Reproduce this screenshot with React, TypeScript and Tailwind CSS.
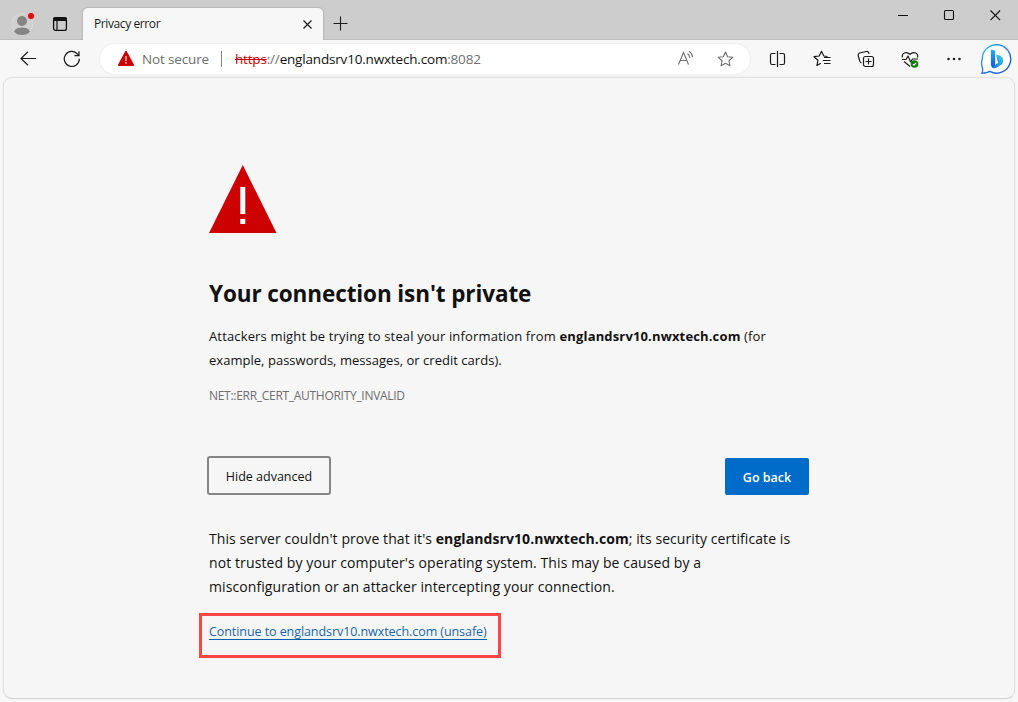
import type { ReactNode } from "react";

function IconButton({ label, className, children }: { label: string; className: string; children: ReactNode }) {
  return (
    <button aria-label={label} className={`flex h-9 shrink-0 items-center justify-center text-[#1b1b1b] ${className}`}>
      {children}
    </button>
  );
}

function TabStrip() {
  return (
    <header className="flex h-10 shrink-0 border-b border-[#c0c0c0] bg-[#cdcdcd]">
      <div className="flex w-[83px] pt-3 pl-3">
        <svg width="24" height="24" viewBox="0 0 24 24">
          <circle cx="10.2" cy="12" r="10.5" fill="#d0d0d0" stroke="#dadada" />
          <circle cx="10" cy="9" r="5" fill="#858585" />
          <path d="M2 19.5C3.5 16.5 6.5 15.6 10 15.6s6.5.9 8 3.9C16.200 22 13.500 23 10 23s-6.200-1-8-3.500Z" fill="#858585" />
          <circle cx="19" cy="4" r="3.600" fill="#e30c0c" stroke="#dadada" strokeWidth=".8" />
        </svg>
        <svg className="mt-1 ml-4" width="16" height="16" viewBox="0 0 16 16">
          <rect x="1.600" y="1.600" width="12.800" height="12.800" rx="2" fill="none" stroke="#111" strokeWidth="1.300" />
          <path d="M1 5V3.200Q1 1 3.200 1h9.600Q15 1 15 3.200V5Z" fill="#111" />
          <path d="M5 4v10" stroke="#111" strokeWidth="1.200" />
        </svg>
      </div>
      <div className="mt-2 flex h-8 w-60 shrink-0 items-center justify-between rounded-t-[5px] bg-[#f7f7f7] pr-[11px] pl-[11px] shadow-[0_0_2px_rgba(0,0,0,0.3)] [clip-path:inset(-3px_-3px_0_-3px)]">
        <span className="text-[12px] leading-8 tracking-[-0.4px] whitespace-nowrap text-[#1b1b1b]">Privacy error</span>
        <svg width="9" height="9" viewBox="0 0 9 9" stroke="#1b1b1b" strokeWidth="1.200">
          <path d="m.5.5 8 8m0-8-8 8" />
        </svg>
      </div>
      <svg className="mt-4 ml-[10px]" width="15" height="15" viewBox="0 0 15 15" stroke="#1b1b1b" strokeWidth="1.100">
        <path d="M7.500.5v14M.5 7.500h14" />
      </svg>
      <div className="ml-auto flex pt-2">
        <svg width="128" height="16" viewBox="0 0 128 16" fill="none" stroke="#111" strokeWidth="1.100">
          <path d="M8 7.500h10M100.500 2.500l9.600 9.600m0-9.600-9.600 9.600" />
          <rect x="54.500" y="2.500" width="9" height="9" rx="1.300" />
        </svg>
      </div>
    </header>
  );
}

function BingLogo() {
  return (
    <svg className="mt-px shrink-0" width="32" height="33" viewBox="0 0 32 33">
      <defs>
        <linearGradient id="ring" x1="0" y1="0" x2="1" y2="1">
          <stop offset="0" stopColor="#39c5f4" />
          <stop offset=".5" stopColor="#2679e8" />
          <stop offset="1" stopColor="#1d4fc8" />
        </linearGradient>
        <linearGradient id="b" x1="0" y1="0" x2="0" y2="1">
          <stop offset="0" stopColor="#28a9ef" />
          <stop offset="1" stopColor="#1756d2" />
        </linearGradient>
        <linearGradient id="bowl" x1="1" y1="0" x2="0" y2="1">
          <stop offset="0" stopColor="#3bd5e8" />
          <stop offset="1" stopColor="#1769df" />
        </linearGradient>
      </defs>
      <path d="M16.500 1.700a14.200 14.200 0 1 1-6.700 26.700C7.500 29.600 5 30.300 1.900 30.300c.7-1.500.9-3.100.7-4.800A14.200 14.200 0 0 1 2.300 15.900 14.200 14.200 0 0 1 16.500 1.700Z" fill="#fff" stroke="url(#ring)" strokeWidth="1.400" />
      <path d="m11.400 6.400 3.200 1.200q.6.200.6.900v14.200l-2.700 1.700q-1.600-.5-1.600-2.800V7q0-.7.500-.6Z" fill="url(#b)" />
      <path d="M16.500 12.600q-.4-1.300.9-.9l3.200 1.300q2.500 1.100 2.500 4v1.600q0 2-1.800 3.200l-4.400 2.700q-3.200 1.500-5.400-.3l6.700-4.500q-.9-.7-1.700-7.100Z" fill="url(#bowl)" />
    </svg>
  );
}

const starPath = "m8.500 1 2.150 4.700 5.100.6-3.800 3.450 1 5-4.450-2.500-4.450 2.500 1-5L1.250 6.300l5.100-.6Z";

function Toolbar() {
  return (
    <nav className="flex h-[37px] shrink-0 items-center pt-px">
      <IconButton label="Back" className="ml-5 w-[17px]">
        <svg className="shrink-0" width="17" height="16" viewBox="0 0 17 16" fill="none" stroke="currentColor" strokeWidth="1.200">
          <path d="M16 7.500H1M8 .7 1 7.500l7 6.800" />
        </svg>
      </IconButton>
      <IconButton label="Refresh" className="ml-[25px] w-5">
        <svg width="18" height="18" viewBox="0 0 18 18" fill="none" stroke="currentColor" strokeWidth="1.200">
          <path d="M16.300 8.800A7.500 7.500 0 1 1 14.600 4.200L16 5.600M16 1.200v4.500h-4.500" />
        </svg>
      </IconButton>
      <div className="ml-[18px] flex h-[30px] w-[650px] shrink-0 items-center rounded-full bg-white pl-[17px] shadow-[0_0_3px_rgba(0,0,0,0.08)]">
        <svg className="shrink-0" width="18" height="16" viewBox="0 0 18 16">
          <path d="M9 1 2 14h14Z" fill="#c00" stroke="#c00" strokeWidth="2" strokeLinejoin="round" />
          <path d="M9 5v5M9 11v1.700" stroke="#f3bcbc" strokeWidth="1.500" />
        </svg>
        <span className="ml-[7px] w-[67px] text-[13.500px] leading-[22px] tracking-[-0.15px] whitespace-nowrap text-[#6e6e6e]">Not secure</span>
        <span className="ml-[12px] h-4 w-px bg-[#858585]" />
        <span className="ml-[13px] w-[430px] text-[13.500px] leading-[22px] tracking-[-0.18px] whitespace-nowrap text-[#707070]">
          <s className="text-[#c00]">https</s>://<span className="text-[#111]">englandsrv10.nwxtech.com</span>:8082
        </span>
        <svg className="ml-[12px] shrink-0" width="18" height="18" viewBox="0 0 18 18" fill="none" stroke="#707070" strokeWidth="1.100">
          <path d="m1.500 14.500 5-12 5 12M3.200 10.500h6.600M10.500 3.500q2 1.500 2.300 4.500M12 1.200q3.300 2 3.600 6" />
        </svg>
        <svg className="ml-[22px] shrink-0" width="17" height="16" viewBox="0 0 17 16" fill="none" stroke="#707070" strokeWidth="1.100" strokeLinejoin="round">
          <path d={starPath} />
        </svg>
      </div>
      <IconButton label="Split screen" className="ml-[15px] w-[25px]">
        <svg width="17" height="16" viewBox="0 0 17 16" fill="none" stroke="currentColor" strokeWidth="1.200">
          <path d="M8.500 0v16M6.500 2.500H3Q1.500 2.500 1.500 4v8q0 1.500 1.500 1.500h3.500M10.500 2.500H14q1.500 0 1.500 1.500v8q0 1.500-1.500 1.500h-3.500" />
        </svg>
      </IconButton>
      <IconButton label="Favorites" className="ml-5 w-6">
        <svg width="18" height="18" viewBox="0 0 18 18" fill="none" stroke="currentColor" strokeWidth="1.200" strokeLinejoin="round">
          <path d="M14.500 6.500 10.800 6 8.500 1.300 6.200 6 1 6.700l3.900 3.600-1 5.200 3.900-2.200M11 7.500h6.500M9.800 10.500h7.700M11 13.500h6.500" />
        </svg>
      </IconButton>
      <IconButton label="Collections" className="ml-5 w-6">
        <svg width="18" height="18" viewBox="0 0 18 18" fill="none" stroke="currentColor" strokeWidth="1.200">
          <rect x="6.500" y="6.500" width="10" height="10" rx="2" />
          <path d="M11.500 8.500v6M8.500 11.500h6M4.500 13Q3 12.500 2.700 11L1.200 5.500Q.8 3.600 2.500 3l6.800-1.500q1.800-.4 2.400 1.200l.4 1.200" />
        </svg>
      </IconButton>
      <IconButton label="Browser essentials" className="ml-5 w-6">
        <svg width="18" height="18" viewBox="0 0 18 18" fill="none" stroke="currentColor" strokeWidth="1.200" strokeLinejoin="round">
          <path d="M1.500 7.500C.2 3.700 5 .5 9 4.300 13 .5 17.800 3.700 16.500 7.500M1 9.500h4l2-3.500 2.700 6L11.500 9H17M3 11.500l6 5" />
          <circle cx="13.500" cy="14" r="3.800" fill="#107c10" stroke="none" />
          <path d="m11.900 14.200 1.200 1 2-2.300" stroke="#fff" />
        </svg>
      </IconButton>
      <IconButton label="Settings and more" className="ml-5 w-6">
        <svg width="16" height="4" viewBox="0 0 16 4" fill="currentColor">
          <circle cx="2.500" cy="2" r="1.250" />
          <circle cx="8" cy="2" r="1.250" />
          <circle cx="13.500" cy="2" r="1.250" />
        </svg>
      </IconButton>
      <IconButton label="Bing" className="ml-[14px] w-8">
        <BingLogo />
      </IconButton>
    </nav>
  );
}

export default function App() {
  return (
    <div className="flex h-[702px] w-[1018px] flex-col overflow-hidden bg-[#f7f7f7] font-['Open_Sans','Noto_Sans',sans-serif]">
      <TabStrip />
      <Toolbar />
      <main className="mx-[3px] h-[622px] shrink-0 rounded-[9px] border border-[#e2e2e2] border-b-[#d2d2d2] bg-[#f6f6f6] pt-[87px] pl-[205px] text-[#111] shadow-[0_0_2px_rgba(0,0,0,0.08)]">
        <div className="flex w-[600px] flex-col items-start whitespace-nowrap">
          <svg width="68" height="68" viewBox="0 0 68 68">
            <path d="M33.800 0 67.500 68H0Z" fill="#c00" />
            <path d="M31.300 22h5v27h-5zM31.300 54h5v5h-5z" fill="#fff" />
          </svg>
          <h1 className="mt-[45px] text-[22.5px] leading-8 font-bold tracking-[-0.1px]">Your connection isn't private</h1>
          <p className="mt-[14px] text-[13px] leading-6">
            <span className="block tracking-[0.15px]">Attackers might be trying to steal your information from <b>englandsrv10.nwxtech.com</b> (for</span>
            <span className="block tracking-[0.03px]">example, passwords, messages, or credit cards).</span>
          </p>
          <p className="mt-3 text-[12px] leading-6 tracking-[-0.29px] text-[#6e6e6e]">NET::ERR_CERT_AUTHORITY_INVALID</p>
          <div className="mt-[48px] -ml-0.5 flex h-[39px] w-[602px] items-end justify-between">
            <button className="h-[39px] w-[124px] rounded-[3px] border-2 border-[#858585] pt-[3px] text-[12.5px]">Hide advanced</button>
            <button className="h-[37px] w-[84px] rounded-[2px] bg-[#006cca] pt-[3px] text-[12.5px] font-semibold text-white">Go back</button>
          </div>
          <p className="mt-8 text-[14px] leading-6">
            <span className="block tracking-[0.08px]">This server couldn't prove that it's <b>englandsrv10.nwxtech.com</b>; its security certificate is</span>
            <span className="block tracking-[0.1px]">not trusted by your computer's operating system. This may be caused by a</span>
            <span className="block tracking-[0.09px]">misconfiguration or an attacker intercepting your connection.</span>
          </p>
          <div className="mt-[14px] -ml-[10px] h-[45px] w-[302px] border-3 border-[#ff4646] pt-[9px] pl-[7px]">
            <a className="block w-[278px] border-b border-[#0060b0] text-[12.500px] leading-[14px] tracking-[-0.07px] text-[#1765ad]">Continue to englandsrv10.nwxtech.com (unsafe)</a>
          </div>
        </div>
      </main>
    </div>
  );
}
